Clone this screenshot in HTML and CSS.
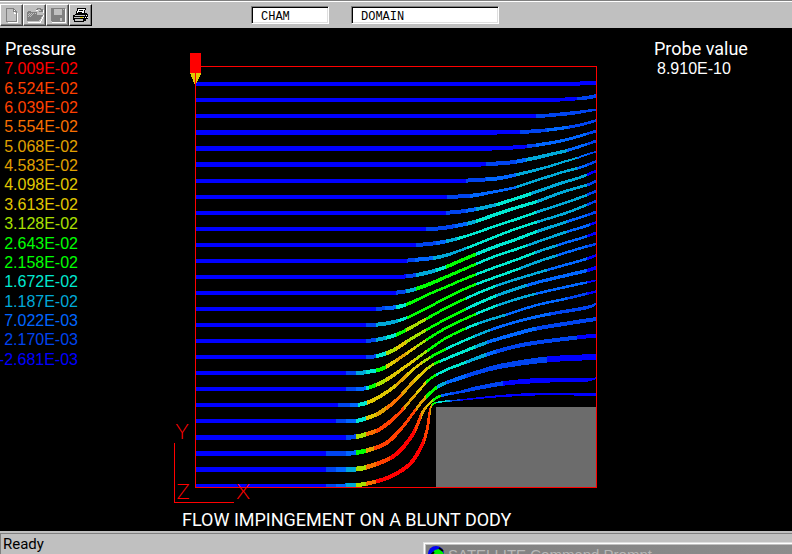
FILE: index.html
```html
<!DOCTYPE html>
<html lang="en">
<head>
<meta charset="utf-8">
<title>Flow impingement on a blunt body</title>
<link rel="stylesheet" href="styles.css">
</head>
<body>
<header class="toolbar">
  <div class="tools">
    <button class="tool" type="button" aria-label="New">
      <svg width="16" height="16" shape-rendering="crispEdges"><path d="M4 15.500H13.500V6M10 2V6H13" fill="none" stroke="#fff"/><path d="M2.500 1.500H9.500L12.500 4.500V14.500H2.500ZM9.500 1.500V4.500H12.500" fill="none" stroke="#808080"/></svg>
    </button>
    <button class="tool" type="button" aria-label="Open">
      <svg width="18" height="16" shape-rendering="crispEdges"><path d="M2 15.500H14L18 8.500M10 2V3H12M17 3V6" fill="none" stroke="#fff"/><path d="M1 14V5H2V4H5V5H11V8H17V9H16V10H15V12H14V13H13V14Z" fill="#808080"/><path d="M3 6h1v1H3zM5 6h1v1H5zM7 6h1v1H7zM9 6h1v1H9zM2 7h1v1H2zM4 7h1v1H4zM6 7h1v1H6zM3 8h1v1H3zM5 8h1v1H5zM2 9h1v1H2zM4 9h1v1H4z" fill="#c0c0c0"/><path d="M10 2.500H11V1.500H14V2.500H15V4.500H16M13 4.500H17M16.500 2V5" fill="none" stroke="#808080"/></svg>
    </button>
    <button class="tool" type="button" aria-label="Save">
      <svg width="16" height="16" shape-rendering="crispEdges"><path d="M2 15.500H15.500V2" fill="none" stroke="#fff"/><path d="M1 1H15V15H2V14H1Z" fill="#808080"/><path d="M4 2H12V8H4ZM10 11H12V14H10ZM13 2H14V3H13Z" fill="#c0c0c0"/></svg>
    </button>
    <button class="tool tool-print" type="button" aria-label="Print">
      <svg width="18" height="16" shape-rendering="crispEdges"><path d="M5 1H14V3H13V6H15V7H16V12H14V14H12V15H2V13H1V8H3V7H4V4H5Z" fill="#000"/><path d="M6 2H13V3H12V6H5V4H6Z" fill="#fff"/><path d="M7 3.500H11M6 5.500H10" stroke="#000"/><path d="M3 8H13V9H3ZM2 10H12V11H2ZM3 12H11V14H3Z" fill="#c0c0c0"/><path d="M8 10H11V11H8Z" fill="#e0d000"/><path d="M14 8H15V9H14ZM13 10H14V11H13ZM15 10H16V11H15Z" fill="#fff"/></svg>
    </button>
  </div>
  <input class="field field-short" type="text" value="CHAM" aria-label="Object type">
  <input class="field field-long" type="text" value="DOMAIN" aria-label="Object name">
</header>

<main class="view">
  <section class="legend">
    <h1 class="heading">Pressure</h1>
    <ol class="scale">
      <li class="c11">7.009E-02</li>
      <li class="c10">6.524E-02</li>
      <li class="c10">6.039E-02</li>
      <li class="c9">5.554E-02</li>
      <li class="c8">5.068E-02</li>
      <li class="c8">4.583E-02</li>
      <li class="c7">4.098E-02</li>
      <li class="c7">3.613E-02</li>
      <li class="c6">3.128E-02</li>
      <li class="c5">2.643E-02</li>
      <li class="c5">2.158E-02</li>
      <li class="c4">1.672E-02</li>
      <li class="c3">1.187E-02</li>
      <li class="c2">7.022E-03</li>
      <li class="c1">2.170E-03</li>
      <li class="c0">-2.681E-03</li>
    </ol>
  </section>

  <figure class="plot">
    <svg class="chart" viewBox="170 48 430 460" role="img" aria-label="Streamlines coloured by pressure">
      <defs id="gradients"></defs>
      <rect x="436" y="407" width="160" height="80" fill="#6c6c6c"/>
      <g id="streams" shape-rendering="crispEdges"></g>
      <path d="M190 73H201V75H200V77H199V79H198V81H197V83H196V84H194V82H193V79H192V77H191V74H190Z" fill="#e0c800" shape-rendering="crispEdges"/>
      <path d="M195.500 66.500H596.500V487.500H195.500Z" class="frame"/>
      <rect x="190" y="53" width="11" height="20" fill="#f00"/>
      <path d="M174.500 443V502.500H234" class="frame"/>
      <g class="axis">
        <text x="182" y="439">Y</text>
        <text x="183" y="499">Z</text>
        <text x="243" y="499">X</text>
      </g>
    </svg>
    <figcaption class="caption">FLOW IMPINGEMENT ON A BLUNT DODY</figcaption>
  </figure>

  <section class="probe">
    <h2 class="heading">Probe value</h2>
    <p class="reading">8.910E-10</p>
  </section>
</main>

<footer class="status">Ready</footer>

<aside class="window">
  <div class="titlebar">
    <svg class="globe" width="17" height="17"><circle cx="8" cy="8" r="8" fill="#0000f0"/><path d="M4 7L7 4L11 3L14 5L16 8L15 13L9 16L4 12Z" fill="#00f000"/><path d="M1 13L4 8L6 6M11 2L15 5" fill="none" stroke="#000" stroke-width="2"/></svg>
    <span>SATELLITE Command Prompt</span>
  </div>
</aside>
<script src="streams.js"></script>
</body>
</html>
```
FILE: styles.css
```css
* { box-sizing: border-box; }

body {
  margin: 0;
  min-height: 100vh;
  display: flex;
  flex-direction: column;
  position: relative;
  overflow: hidden;
  background: #000;
  color: #fff;
  font-family: "Liberation Sans", Arial, sans-serif;
  font-size: 16px;
}

.toolbar {
  height: 28px;
  display: flex;
  align-items: flex-start;
  padding-top: 2px;
  background: #c0c0c0;
  border-top: 1px solid #808080;
  box-shadow: inset 0 1px #fff;
}

.tools { display: flex; width: 251px; padding-top: 1px; }

.tool {
  width: 23px;
  height: 22px;
  padding: 0;
  display: flex;
  align-items: center;
  justify-content: center;
  background: #c0c0c0;
  border: 1px solid;
  border-color: #fff #404040 #404040 #fff;
  box-shadow: inset -1px -1px #808080;
}

.tool-print { border-color: #fff #000 #000 #fff; }

.field {
  height: 18px;
  margin: 3px 22px 0 0;
  padding: 3px 0 0 9px;
  border: 1px solid;
  border-color: #808080 #fff #fff #808080;
  border-radius: 0;
  box-shadow: inset 1px 1px #000, inset -1px -1px #dfdfdf;
  background: #fff;
  color: #000;
  font: 12px "Liberation Mono", "Courier New", monospace;
}

.field-short { width: 78px; }
.field-long { width: 148px; }

.view {
  flex: 1;
  display: grid;
  grid-template-columns: 170px 1fr 138px;
}

.heading {
  margin: 0;
  font: 18px/21px Roboto, Arial, sans-serif;
}

.legend { padding-top: 10px; }
.legend .heading { padding-left: 5px; }

.scale {
  width: 78px;
  height: 310px;
  margin: 0;
  padding: 0;
  display: grid;
  grid-template-columns: 100%;
  grid-auto-rows: 1fr;
  align-items: center;
  justify-items: end;
  list-style: none;
  line-height: 19px;
  white-space: nowrap;
}

.c0 { color: #0000ff; }
.c1 { color: #0044f0; }
.c2 { color: #0066ff; }
.c3 { color: #00a8d8; }
.c4 { color: #00e8d0; }
.c5 { color: #00ff00; }
.c6 { color: #a8e000; }
.c7 { color: #e0c800; }
.c8 { color: #e0a000; }
.c9 { color: #f87000; }
.c10 { color: #ff4000; }
.c11 { color: #ff0000; }

.plot { margin: 0; padding-top: 20px; }
.chart { display: block; width: 100%; max-width: 430px; }
.frame { fill: none; stroke: #f00; shape-rendering: crispEdges; }

.axis text {
  fill: #f00;
  font: 300 22px Lato, sans-serif;
  text-anchor: middle;
}

.caption {
  padding-left: 12px;
  font: 18px/23px Roboto, Arial, sans-serif;
  white-space: nowrap;
}

.probe { padding-top: 10px; }
.reading { margin: 0; padding-left: 3px; line-height: 20px; }

.status {
  height: 23px;
  padding-left: 3px;
  background: #c0c0c0;
  border-top: 2px solid #c0c0c0;
  box-shadow: inset 1px 1px #808080;
  color: #000;
  font: 15px/22px Roboto, Arial, sans-serif;
}

.window {
  position: absolute;
  left: 423px;
  right: 0;
  bottom: 0;
  height: 12px;
  overflow: hidden;
  padding: 2px 0 0 2px;
  background: #c0c0c0;
  border: 1px solid #dfdfdf;
  border-width: 1px 0 0 1px;
  box-shadow: inset 1px 1px #fff;
}

.titlebar {
  display: flex;
  gap: 3px;
  height: 20px;
  padding: 1px 2px;
  background: linear-gradient(90deg, #808080, #8c8c8c);
  color: #b8b8b8;
  font-size: 15px;
  line-height: 18px;
}
```
FILE: streams.js
```js
const COLORS = ["#0000ff", "#0044f0", "#0066ff", "#00a8d8", "#00e8d0", "#00ff00",
  "#a8e000", "#e0c800", "#e0a000", "#f87000", "#ff4000", "#ff0000"];

// p: path points x,y   c: x where a pressure band starts, band   w: x, thickness
const LINES = [
  {p: "195,84 570,84 580,83.500 596,83", c: "", w: "195,4 596,4"},
  {p: "195,100 555,100 570,99 585,98 596,96", c: "577,1", w: "195,4 580,3 596,3"},
  {p: "195,116 540,116 553,115 573,113 587,111 596,110", c: "536,1", w: "195,4 570,3 590,2 596,1"},
  {p: "195,132.500 487,132.500 530,131.500 543,130.500 563,128 580,125 596,120.500", c: "520,1 547,2 568,1", w: "195,5 480,5 540,3 596,2"},
  {p: "195,148.500 482,148.500 513,147.500 530,146 547,143.500 563,140.500 580,136 596,131", c: "527,1 536,2 587,1", w: "195,5 482,5 530,3 596,2"},
  {p: "195,164.500 470,164.500 487,164 510,162.500 530,159 550,154.500 567,150.500 583,145.500 596,141", c: "486,1 516,2 526,3 567,2 587,1", w: "195,5 460,5 500,4 540,3 596,2"},
  {p: "195,181 457,181 477,180 497,178.500 513,175.500 530,171.500 547,167 563,162 577,158 590,153.500 596,152", c: "466,1 486,2 516,3 577,2 588,1", w: "195,4 480,4 540,2 596,1"},
  {p: "195,197 447,197 473,195.500 490,192.500 513,188 530,182.500 547,177 563,172 580,167.500 596,161.500", c: "447,1 470,2 516,3 577,2 587,1", w: "195,4 460,4 500,2 596,2"},
  {p: "195,213 437,213 457,212 477,209 497,204.500 513,199.500 530,194 547,188 563,182.500 580,177.500 596,171", c: "446,1 466,2 476,3 496,4 531,3 587,0", w: "195,4 450,4 490,3 596,2"},
  {p: "195,229 427,229 443,228 463,224.500 477,221 497,214 517,207.500 537,201.500 563,192 587,185 596,181", c: "426,1 455,2 467,3 476,4 537,3 587,1", w: "195,4 440,4 480,3 596,2"},
  {p: "195,245 417,245 437,243 450,240.500 468,235.500 497,225.500 517,219 537,212 563,203.500 583,196.500 596,191", c: "416,1 436,2 446,3 457,4 536,3 587,1", w: "195,4 430,4 470,2 596,2"},
  {p: "195,261 402,261 413,260 433,258 447,255 468,247.500 497,236 517,228.500 537,222 563,214 583,206.500 596,201", c: "407,1 415,2 433,3 467,4 537,3 587,1", w: "195,4 420,4 460,2 596,2"},
  {p: "195,277 398,277 413,275.500 430,272 447,266.500 468,257.500 497,246 517,239 537,231.500 563,223 583,216.500 596,212", c: "406,1 416,3 436,4 446,5 476,4 537,3 567,2 587,1", w: "195,4 410,4 440,3 596,2"},
  {p: "195,293 393,293 410,290.500 427,285 447,276.500 468,267.500 493,257 517,249 537,242 563,233 583,227 596,222.500", c: "396,1 406,3 416,5 476,4 527,3 567,2 590,0", w: "195,4 400,4 430,3 480,2 596,2"},
  {p: "195,309 375,309 397,307 410,303 427,295 447,286.500 468,277.500 493,268 517,259.500 537,252 563,243.500 583,237.500 596,233", c: "376,1 385,2 396,4 406,5 476,4 535,3 557,2 587,0", w: "195,4 390,4 420,2 596,2"},
  {p: "195,325 368,325 383,324 397,321 410,316.500 427,308 447,297.500 468,287.500 493,278 517,269.500 537,262 563,253.500 583,247.500 596,244", c: "366,1 376,3 398,4 407,5 476,4 520,3 557,2 587,1", w: "195,4 380,4 410,2 596,2"},
  {p: "195,341 367,341 383,338.500 397,334.500 410,328 427,318.500 447,307.500 468,297.500 493,287 517,279 537,273 563,265.500 583,260 596,255.500", c: "366,1 376,3 386,4 396,5 406,6 426,5 466,4 496,3 547,2 587,0", w: "195,4 380,4 400,3 440,2 596,2"},
  {p: "195,357 365,357 377,356 393,350.500 410,339.500 427,329.500 447,318.500 468,308 493,297 517,288.500 537,282.500 553,278.500 587,270.500 596,267.500", c: "366,1 376,4 386,6 396,7 406,6 426,5 466,4 496,3 527,2 587,0", w: "195,4 380,4 400,3 430,2 596,3"},
  {p: "195,373 358,373 367,372 380,369.500 390,364.500 410,351 427,339.500 447,327.500 468,317.500 493,307 517,299 537,293.500 577,284.500 596,280.500", c: "346,1 356,3 366,4 376,5 386,7 396,8 406,7 416,6 426,5 476,4 497,3 536,2 587,0", w: "195,4 370,4 390,3 420,2 580,2 596,1"},
  {p: "195,389 358,389 367,388 377,384.500 390,377.500 407,365.500 427,351 447,337.500 468,327.500 487,320.500 507,314.500 537,305 567,298.500 596,291.500", c: "346,1 356,2 366,4 369,5 376,6 386,7 416,6 427,5 466,4 478,3 506,2 567,1 587,0", w: "195,4 370,4 390,3 420,2 596,2"},
  {p: "195,405 350,405 360,404.500 370,401.500 383,394.500 397,384.500 413,369.500 430,357.500 447,348.500 468,339 493,329 523,320 550,314 587,307.500 596,303.500", c: "338,1 350,2 358,4 367,7 396,8 407,7 422,6 430,5 446,4 474,3 490,2 550,1", w: "195,4 360,4 380,3 420,2 500,2 587,3 596,1"},
  {p: "195,421 356,421 367,418 380,412.500 397,399.500 413,382 430,366.500 447,358.500 460,353 487,342.500 510,335.500 537,328.500 570,323 596,319", c: "336,1 346,2 356,4 366,7 376,8 386,9 402,8 414,7 427,6 434,5 440,4 475,3 487,2 536,1", w: "195,4 370,4 390,3 430,2 500,3 596,4"},
  {p: "195,437.500 345,437.500 357,436.500 367,434 380,429 397,415.500 413,397.500 430,379 447,369.500 460,364.500 487,354.500 513,347 537,342.500 577,337.500 596,335.500", c: "346,1 356,6 366,9 376,10 404,8 416,7 426,5 436,4 466,3 486,2 496,1 577,0", w: "195,5 340,5 380,4 410,2 450,2 510,4 596,4"},
  {p: "195,453.500 345,453.500 357,452.500 370,449.500 387,442.500 403,426.500 417,408 427,396 440,385.500 460,378 477,372.500 497,367 523,362.500 547,359.500 570,358 596,357", c: "326,1 346,2 356,5 366,8 374,10 416,8 426,5 437,3 446,2 466,1 547,0", w: "195,5 340,5 380,4 415,2 450,3 497,5 547,6 596,6"},
  {p: "195,469.500 345,469.500 357,469 367,467 383,461.500 397,453.500 410,438.500 417,425.500 422,413.500 427,406 437,397.500 447,394.500 460,392 480,387.500 503,383.500 530,381 560,380 587,380 596,378", c: "326,1 336,2 346,3 356,6 366,9 376,10 390,11 415,10 421,8 426,7 430,6 433,5 441,2 451,1 503,0", w: "195,5 350,5 395,4 415,3 425,2 460,2 480,4 530,5 580,4 596,1"},
  {p: "195,485.500 345,485.500 357,485 370,483 387,478 403,469.500 413,460.500 422,445 427,430 429,417 431,407 437,402.500 460,400 490,397 517,395 547,394 596,394.500", c: "326,1 336,2 346,3 356,6 366,9 376,11 424,10 430,8 432,5 436,4 446,3 450,1 460,0", w: "195,4 390,4 415,4 422,3 429,2 432,1 470,1 520,2 596,2"}
];

const parse = s => s ? s.split(" ").map(t => t.split(",").map(Number)) : [];
const LEFT = 195, RIGHT = 596;

// Catmull-Rom interpolation through the points
function smooth(pts) {
  const out = [];
  for (let i = 0; i < pts.length - 1; i++) {
    const b = pts[i], c = pts[i + 1];
    if (i === 0) { out.push(b); continue; }
    const a = i === 1 ? [b[0] - 8, b[1]] : pts[i - 1];
    const d = pts[i + 2] || c;
    for (let k = 0; k < 6; k++) {
      const t = k / 6;
      out.push([0, 1].map(j => 0.5 * (2 * b[j] + (c[j] - a[j]) * t +
        (2 * a[j] - 5 * b[j] + 4 * c[j] - d[j]) * t * t +
        (3 * b[j] - a[j] - 3 * c[j] + d[j]) * t * t * t)));
    }
  }
  out.push(pts[pts.length - 1]);
  return out;
}

// Thin stretches get extra body so that they stay legible on black
function widthAt(ws, x) {
  let w = ws[ws.length - 1][1];
  for (let i = 1; i < ws.length; i++) {
    if (x <= ws[i][0]) {
      const [x0, w0] = ws[i - 1], [x1, w1] = ws[i];
      w = w0 + (w1 - w0) * (x - x0) / (x1 - x0);
      break;
    }
  }
  return w < 4 ? w + Math.min(0.6, 4 - w) : w;
}

let defs = "", shapes = "";
LINES.forEach((line, n) => {
  const pts = smooth(parse(line.p)), ws = parse(line.w);
  const top = [], bottom = [];
  pts.forEach((p, i) => {
    const q = pts[Math.max(0, i - 1)], r = pts[Math.min(pts.length - 1, i + 1)];
    const dx = r[0] - q[0], dy = r[1] - q[1], len = Math.hypot(dx, dy);
    const h = widthAt(ws, p[0]) / 2;
    top.push([p[0] + dy / len * h, p[1] - dx / len * h]);
    bottom.unshift([p[0] - dy / len * h, p[1] + dx / len * h]);
  });
  let stops = "", last = 0;
  parse(line.c).forEach(([x, c]) => {
    const o = (x - LEFT) / (RIGHT - LEFT);
    stops += `<stop offset="${o}" stop-color="${COLORS[last]}"/><stop offset="${o}" stop-color="${COLORS[c]}"/>`;
    last = c;
  });
  stops += `<stop offset="1" stop-color="${COLORS[last]}"/>`;
  defs += `<linearGradient id="s${n}" gradientUnits="userSpaceOnUse" x1="${LEFT}" y1="0" x2="${RIGHT}" y2="0">${stops}</linearGradient>`;
  shapes += `<polygon fill="url(#s${n})" points="${top.concat(bottom).map(p => p.join(",")).join(" ")}"/>`;
});
document.getElementById("gradients").innerHTML = defs;
document.getElementById("streams").innerHTML = shapes;
```
